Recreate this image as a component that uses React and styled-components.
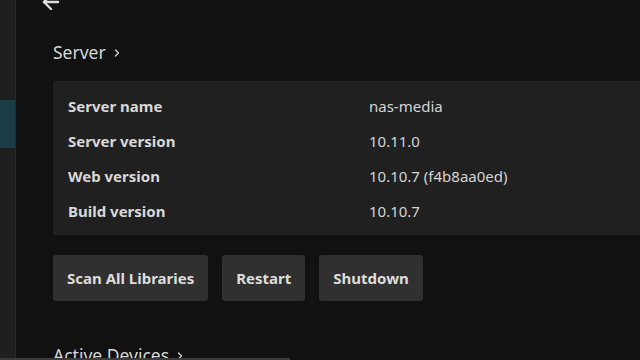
import React from 'react';
import styled, { createGlobalStyle } from 'styled-components';
import { ArrowLeft, ChevronRight } from 'lucide-react';

const GlobalStyle = createGlobalStyle`
  html, body {
    margin: 0;
    padding: 0;
    background: #111111;
    overflow: hidden;
  }
  body {
    font-family: "Noto Sans", "Open Sans", sans-serif;
    color: #dddddd;
  }
`;

const serverInfo = [
  { label: 'Server name', value: 'nas-media' },
  { label: 'Server version', value: '10.11.0' },
  { label: 'Web version', value: '10.10.7 (f4b8aa0ed)' },
  { label: 'Build version', value: '10.10.7' },
];

export default function App() {
  return (
    <Page>
      <GlobalStyle />
      <Sidebar>
        <NavItem />
        <NavItem active />
        <NavItem />
      </Sidebar>
      <Main>
        <BackButton>
          <ArrowLeft size={24} strokeWidth={2.4} />
        </BackButton>
        <SectionTitle>
          Server <ChevronRight size={12} strokeWidth={2.6} />
        </SectionTitle>
        <Card>
          {serverInfo.map((row) => (
            <Row key={row.label}>
              <Label>{row.label}</Label>
              <Value>{row.value}</Value>
            </Row>
          ))}
        </Card>
        <Actions>
          <Button>Scan All Libraries</Button>
          <Button>Restart</Button>
          <Button>Shutdown</Button>
        </Actions>
        <SectionTitle next>
          Active Devices <ChevronRight size={12} strokeWidth={2.6} />
        </SectionTitle>
      </Main>
      <ScrollThumb />
    </Page>
  );
}

const Page = styled.div`
  position: relative;
  display: flex;
  width: 640px;
  height: 360px;
  overflow: hidden;
  background: #111111;
`;

const Sidebar = styled.div`
  flex: 0 0 15px;
  display: flex;
  flex-direction: column;
  padding-top: 20px;
  background: #1f1f1f;
  border-right: 1px solid #2b2b2b;
`;

const NavItem = styled.div`
  height: ${(props) => (props.active ? '48px' : '80px')};
  background: ${(props) => (props.active ? '#1b3c47' : 'transparent')};
`;

const Main = styled.div`
  flex: 1;
  min-width: 0;
  padding-left: 37px;
  display: flex;
  flex-direction: column;
  align-items: flex-start;
`;

const BackButton = styled.div`
  margin: -10px 0 0 -14px;
  height: 24px;
  color: #dddddd;
`;

const SectionTitle = styled.h2`
  display: flex;
  align-items: center;
  gap: 5px;
  margin: ${(props) => (props.next ? '41px 0 0' : '25px 0 0')};
  font-size: 17.5px;
  font-weight: 400;
  line-height: 26px;
  color: #d6d6d6;
  white-space: nowrap;

  svg {
    margin-top: 2px;
  }
`;

const Card = styled.div`
  margin-top: 16px;
  width: 620px;
  padding: 7px 0 7px 15px;
  background: #202020;
  border-radius: 2px;
`;

const Row = styled.div`
  display: grid;
  grid-template-columns: 301px 1fr;
  align-items: center;
  height: 35px;
  font-size: 15px;
`;

const Label = styled.span`
  font-weight: 700;
  color: #d8d8d8;
`;

const Value = styled.span`
  font-weight: 400;
  color: #d4d4d4;
`;

const Actions = styled.div`
  display: flex;
  gap: 14px;
  margin-top: 20px;
`;

const Button = styled.button`
  height: 46px;
  padding: 0 14px;
  border: none;
  border-radius: 3px;
  background: #303030;
  color: #dddddd;
  font-family: "Noto Sans", "Open Sans", sans-serif;
  font-size: 15px;
  font-weight: 700;
  white-space: nowrap;
`;

const ScrollThumb = styled.div`
  position: absolute;
  left: 0;
  bottom: 0;
  width: 290px;
  height: 2px;
  background: #3a3a3a;
`;
